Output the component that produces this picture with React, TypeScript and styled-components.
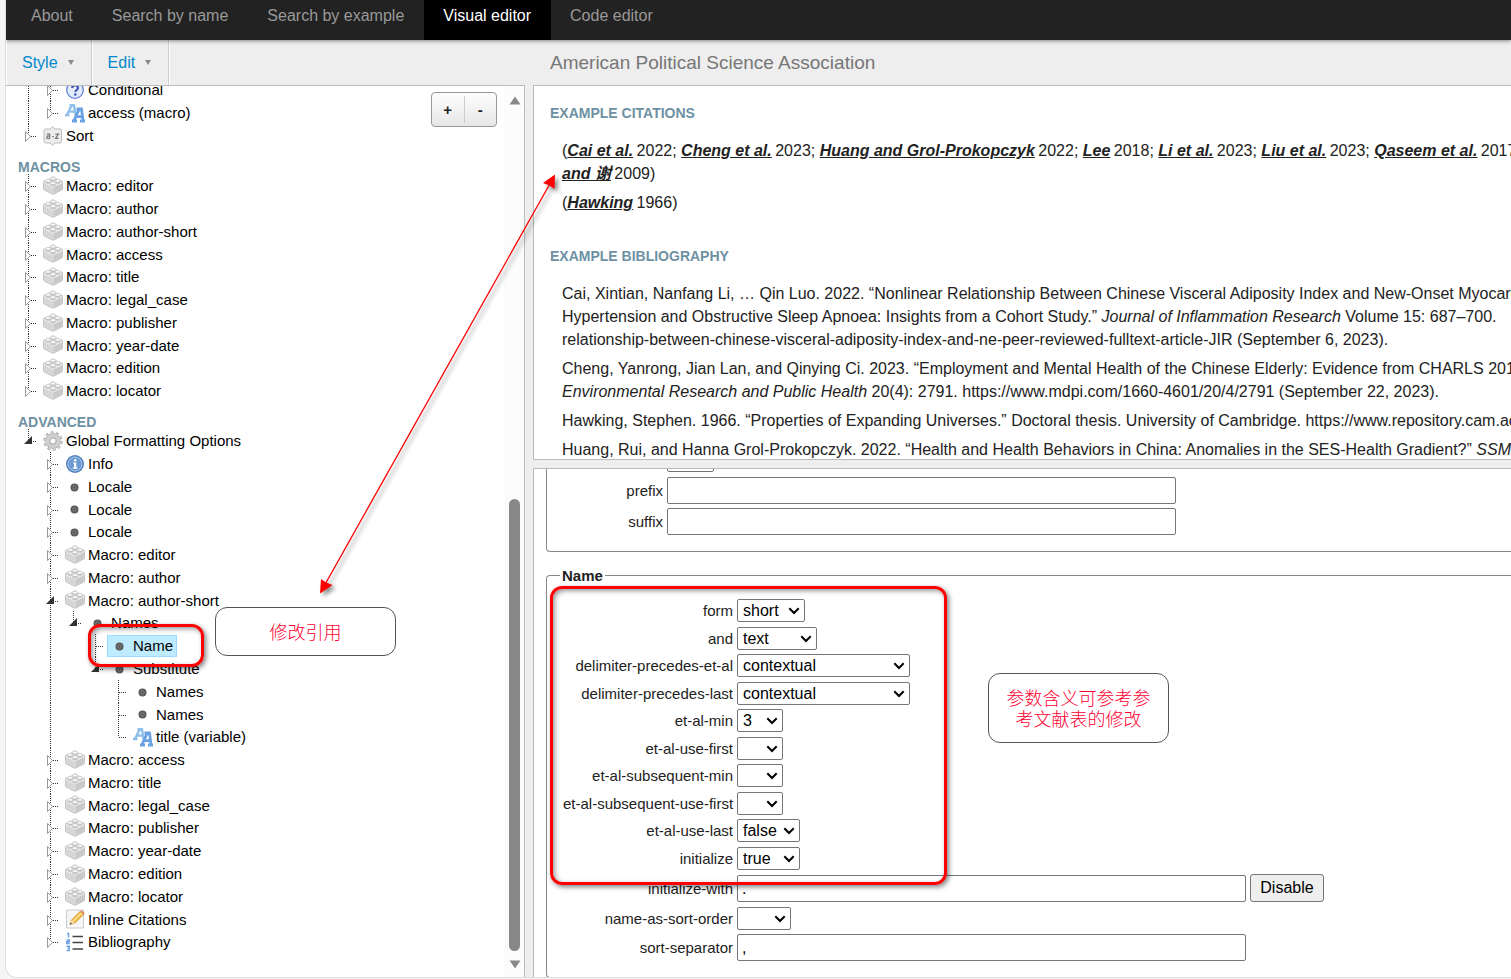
import React from "react";
import styled, { createGlobalStyle, css } from "styled-components";

const Global = createGlobalStyle`
  *, *::before, *::after { box-sizing: border-box; }
  body {
    margin: 0;
    background: #f5f5f5;
    color: #222;
    font: 16px/23px "Liberation Sans", Arial, "Noto Sans CJK SC", sans-serif;
    overflow: hidden;
  }
`;

/* ---------- page frame ---------- */

const Page = styled.div`
  position: relative;
  height: 100vh;
  padding: 0 0 1px 5px;
  overflow: hidden;
`;

const Frame = styled.div`
  display: flex;
  flex-direction: column;
  height: 100%;
  background: #eee;
  border-left: 1px solid #ddd;
  border-bottom: 1px solid #ddd;
  border-bottom-left-radius: 12px;
  overflow: hidden;
`;

const Nav = styled.nav`
  display: flex;
  flex: none;
  height: 40px;
  padding-left: 6px;
  background: #222;
  box-shadow: 0 1px 4px rgba(0, 0, 0, 0.45);
  z-index: 1;
`;

const NavLink = styled.a<{ $active?: boolean }>`
  padding: 4px 20px 0 19px;
  color: ${(p) => (p.$active ? "#fff" : "#999")};
  background: ${(p) => (p.$active ? "#000" : "transparent")};
  text-decoration: none;
  white-space: nowrap;
`;

const Toolbar = styled.div`
  display: flex;
  flex: none;
  height: 45px;
  box-shadow: inset 1px 0 0 #fff;
`;

const MenuButton = styled.button`
  display: flex;
  align-items: center;
  gap: 10px;
  padding: 0 17px 0 16px;
  border: 0;
  border-right: 1px solid #ccc;
  box-shadow: 1px 0 0 #fff;
  background: transparent;
  color: #08c;
  font: inherit;

  &::after {
    content: "";
    border: 3px solid transparent;
    border-top: 5px solid #888;
    border-bottom: 0;
  }
`;

const MenuGroup = styled.div`
  display: flex;
  flex: none;
  width: 527px;
`;

const StyleTitle = styled.h1`
  margin: 0;
  padding-left: 17px;
  color: #777;
  font-size: 19px;
  font-weight: 400;
  line-height: 45px;
  white-space: nowrap;
`;

const Body = styled.div`
  display: flex;
  flex: 1;
  min-height: 0;
  gap: 8px;
`;

/* ---------- tree pane ---------- */

const TreePane = styled.section`
  position: relative;
  display: flex;
  flex: none;
  width: 519px;
  background: #fff;
  border-top: 1px solid #bbb;
  border-right: 1px solid #bbb;
  overflow: hidden;
`;

const TreeScroll = styled.div`
  flex: 1;
  min-width: 0;
  margin-top: -8px;
  color: #000;
  font-size: 15px;
`;

const TreeHeading = styled.h2`
  margin: 0;
  padding: 13px 0 0 12px;
  color: #6d91a3;
  font-size: 14px;
  line-height: 14px;
`;

const Tree = styled.ul`
  margin: 0;
  padding: 0 0 0 12px;
  list-style: none;
`;

const TreeItem = styled.li`
  display: flex;
  align-items: center;
  height: 23px;

  &:nth-child(9n + 4),
  &:nth-child(9n + 8) {
    height: 22px;
  }
`;

const Guides = styled.svg`
  flex: none;
  height: 100%;
`;

const ItemLabel = styled.span<{ $selected?: boolean }>`
  display: flex;
  align-items: center;
  gap: 3px;
  height: 22px;
  padding: 0 3px 0 2px;
  border: 1px solid transparent;
  white-space: nowrap;
  ${(p) =>
    p.$selected &&
    css`
      background: #beebff;
      border-color: #99defd;
    `}
`;

const AddRemove = styled.div`
  position: absolute;
  top: 6px;
  right: 27px;
  display: flex;
  align-items: center;
  width: 66px;
  height: 35px;
  border: 1px solid #999;
  border-radius: 4px;
  background: linear-gradient(#fefefe, #e6e6e6);
`;

const AddRemoveButton = styled.button`
  flex: 1;
  height: 27px;
  padding: 0;
  border: 0;
  background: transparent;
  color: #222;
  font: bold 15px/27px "Liberation Sans", Arial, sans-serif;

  & + & {
    border-left: 1px solid #ccc;
  }
`;

const Scrollbar = styled.div`
  display: flex;
  flex: none;
  flex-direction: column;
  align-items: center;
  width: 20px;
  padding: 10px 0 8px;
  border-left: 1px solid #fbfbfb;
  background: #fcfcfc;
`;

const ScrollTrack = styled.div`
  display: flex;
  flex: 1;
  flex-direction: column;
  justify-content: flex-end;
  padding: 9px 0;
`;

const ScrollThumb = styled.div`
  width: 11px;
  height: 54%;
  border-radius: 6px;
  background: #888;
`;

/* ---------- right column ---------- */

const RightColumn = styled.div`
  display: flex;
  flex: 1;
  flex-direction: column;
  gap: 8px;
  min-width: 0;
`;

const Preview = styled.section`
  flex: none;
  height: 375px;
  padding: 19px 0 0 16px;
  background: #fff;
  border: solid #bbb;
  border-width: 1px 0 1px 1px;
  overflow: hidden;
  white-space: nowrap;
`;

const PreviewHeading = styled.h2`
  margin: 0 0 18px;
  color: #6d91a3;
  font-size: 14px;
  line-height: 16px;
`;

const Entries = styled.div`
  margin-bottom: 34px;
  padding-left: 12px;
`;

const Entry = styled.p`
  margin: 0 0 6px;
`;

const Cite = styled.a`
  margin-right: -1px;
  color: #222;
  font-weight: bold;
  font-style: italic;
  text-decoration: underline;
`;

const Properties = styled.section`
  flex: 1;
  min-height: 0;
  padding-left: 12px;
  background: #fff;
  border: solid #bbb;
  border-width: 1px 0 0 1px;
  overflow: hidden;
`;

const PropertyForm = styled.form`
  display: flex;
  flex-direction: column;
  gap: 12px;
  margin-top: -55px;
`;

const Group = styled.fieldset`
  min-width: 0;
  margin: 0;
  padding: 10px 0 13px 16px;
  border: 1px solid #888;
  border-right: 0;
  border-radius: 4px 0 0 4px;
`;

const GroupTitle = styled.legend`
  margin-left: -3px;
  padding: 0 2px;
  font-size: 15px;
  font-weight: bold;
  line-height: 23px;
`;

const Field = styled.div<{ $labelWidth: number }>`
  display: grid;
  grid-template-columns: ${(p) => p.$labelWidth}px auto auto;
  justify-content: start;
  align-items: end;
  column-gap: 4px;
  padding: 2px 0 3px;
  font-size: 15px;

  &:nth-of-type(even) {
    padding-bottom: 2px;
  }
`;

const FieldLabel = styled.label`
  align-self: center;
  text-align: right;
  white-space: nowrap;
`;

const TextInput = styled.input`
  width: 509px;
  height: 27px;
  padding: 0 4px;
  border: 1px solid #767676;
  border-radius: 2px;
  background: #fff;
  color: #000;
  font: 16px "Liberation Sans", Arial, sans-serif;
`;

const SelectBox = styled.span`
  display: grid;
  align-items: center;
  justify-items: end;

  & > * {
    grid-area: 1 / 1;
  }

  & > svg {
    margin-right: 5px;
    pointer-events: none;
  }
`;

const SelectInput = styled.select<{ $width: number }>`
  width: ${(p) => p.$width}px;
  height: 23px;
  padding: 0 0 0 5px;
  border: 1px solid #767676;
  border-radius: 2px;
  background: #fff;
  color: #000;
  font: 16px "Liberation Sans", Arial, sans-serif;
  appearance: none;
`;

const PlainButton = styled.button`
  width: 74px;
  height: 28px;
  padding: 0;
  border: 1px solid #767676;
  border-radius: 3px;
  background: #efefef;
  color: #000;
  font: 16px "Liberation Sans", Arial, sans-serif;
`;

/* ---------- annotations laid over the page ---------- */

const Highlight = styled.div`
  position: absolute;
  border: 3px solid #f00;
  border-radius: 12px;
  box-shadow: 2px 2px 5px rgba(0, 0, 0, 0.5), inset 2px 2px 5px rgba(0, 0, 0, 0.4);
  pointer-events: none;
`;

const NameHighlight = styled(Highlight)`
  left: 88px;
  top: 624px;
  width: 116px;
  height: 43px;
`;

const FormHighlight = styled(Highlight)`
  left: 550px;
  top: 586px;
  width: 397px;
  height: 299px;
`;

const Note = styled.p`
  position: absolute;
  display: flex;
  align-items: center;
  justify-content: center;
  width: 181px;
  margin: 0;
  border: 1px solid #555;
  border-radius: 12px;
  background: #fff;
  color: #ff0030;
  font: 300 18px/21px "Noto Sans CJK SC", sans-serif;
  text-align: center;
`;

const CitationNote = styled(Note)`
  left: 215px;
  top: 607px;
  height: 49px;
`;

const ParameterNote = styled(Note)`
  left: 988px;
  top: 673px;
  height: 70px;
`;

const ArrowLayer = styled.svg`
  position: absolute;
  left: 310px;
  top: 166px;
  pointer-events: none;
  filter: drop-shadow(3px 3px 2px rgba(0, 0, 0, 0.45));
`;

/* ---------- icons ---------- */

type IconName =
  | "brick" | "bullet" | "gear" | "info" | "question"
  | "letters" | "sort" | "pencil" | "list";

function Icon({ name }: { name: IconName }) {
  return (
    <svg width="20" height="20" viewBox="0 0 20 20" aria-hidden="true">
      {name === "brick" && (
        <g>
          <path
            d="M1 5.2 7.200 2.800C7.200.5 12.800.5 12.800 2.800L19 5.200Q19.600 5.500 19.600 6.200V12.800Q19.600 13.500 19 13.800L11 17.900Q10 18.400 9 17.900L1 13.800Q.4 13.500.4 12.800V6.200Q.4 5.500 1 5.200Z"
            fill="#e9e9e9" stroke="#b0b0b0" strokeWidth="0.8"
          />
          <path d="M1.200 7.400 9.700 11.400V17.400L1.200 13.200Z" fill="#d6d6d6" />
          <path d="M18.800 7.400 10.300 11.400V17.400L18.800 13.200Z" fill="#c9c9c9" />
          <g fill="#c4c4c4">
            <path d="M7.400 2.700v2c0 1.400 5.200 1.400 5.200 0v-2Z" />
            <path d="M2.600 4.700v2c0 1.400 5.200 1.400 5.200 0v-2Z" />
            <path d="M12.200 4.700v2c0 1.400 5.200 1.400 5.200 0v-2Z" />
            <path d="M7.400 7.200v2c0 1.400 5.200 1.400 5.200 0v-2Z" />
          </g>
          <g fill="#fafafa" stroke="#bcbcbc" strokeWidth="0.5">
            <ellipse cx="10" cy="2.600" rx="2.600" ry="1.400" />
            <ellipse cx="5.200" cy="4.800" rx="2.600" ry="1.400" />
            <ellipse cx="14.800" cy="4.800" rx="2.600" ry="1.400" />
            <ellipse cx="10" cy="7.200" rx="2.600" ry="1.400" />
          </g>
        </g>
      )}
      {name === "bullet" && (
        <>
          <circle cx="9.500" cy="10.500" r="4" fill="#5a5a5a" />
          <circle cx="9.500" cy="10.500" r="1.800" fill="none" stroke="#858585" strokeWidth="0.8" />
        </>
      )}
      {name === "gear" && (
        <g>
          <circle cx="10" cy="10" r="8" fill="none" stroke="#a8a8a8" strokeWidth="3.400" strokeDasharray="2.700 2.330" />
          <circle cx="10" cy="10" r="5.200" fill="none" stroke="#a8a8a8" strokeWidth="5" />
          <circle cx="10" cy="10" r="7.800" fill="none" stroke="#cfcfcf" strokeWidth="2.400" strokeDasharray="1.600 3.300" strokeDashoffset="-0.5" />
          <circle cx="10" cy="10" r="5.300" fill="none" stroke="#d0d0d0" strokeWidth="3.600" />
          <circle cx="10" cy="10" r="2.800" fill="#fff" stroke="#a0a0a0" strokeWidth="0.6" />
        </g>
      )}
      {name === "info" && (
        <g>
          <circle cx="10" cy="10" r="9" fill="#4d80bd" />
          <circle cx="10" cy="10" r="7" fill="#6c9bd1" stroke="#b5cdea" strokeWidth="1" />
          <path d="M8.3 8.5h3v5h1.2v1.2H7.8v-1.2H9V9.7h-.7Z" fill="#fff" />
          <circle cx="10.2" cy="6.2" r="1.3" fill="#fff" />
        </g>
      )}
      {name === "question" && (
        <g>
          <circle cx="10" cy="10" r="8.3" fill="#e3eafa" stroke="#5f7fd8" strokeWidth="1.3" />
          <path d="M7.2 8c0-3.6 5.8-3.6 5.8 0 0 2-2.7 2-2.7 4" fill="none" stroke="#3c4fb4" strokeWidth="2" />
          <circle cx="10.3" cy="14.5" r="1.2" fill="#3c4fb4" />
        </g>
      )}
      {name === "letters" && (
        <g fill="none">
          <path d="M2 12 6.500 2.500h2.500L10.500 12M4 8.600H10M0 12h4.500M4.500 2.200h5" stroke="#8fc0ec" strokeWidth="2.400" />
          <path d="M9 17.600 14 6.500h2.600L18 17.600M11.500 13.600h6M7 18h5M15 18h5M11.500 6h6" stroke="#6aa2e4" strokeWidth="2.800" />
        </g>
      )}
      {name === "sort" && (
        <g>
          <path d="M2.500 3H7l2.500-2.300L12 3h5a1.500 1.500 0 0 1 1.500 1.500v11A1.500 1.500 0 0 1 17 17h-5l-2.500 2.300L7 17H2.500A1.500 1.500 0 0 1 1 15.500v-11A1.500 1.500 0 0 1 2.500 3Z" fill="#ececec" stroke="#bbb" />
          <path d="M4 8.200h2.600v4.300H4v-2.300h2.600M9 10.500h1.800M12.300 8.200h3.200l-3 4.200h3.200" fill="none" stroke="#777" strokeWidth="1.200" />
        </g>
      )}
      {name === "pencil" && (
        <g>
          <path d="M1.500 1h17v18h-17Z" fill="#f6f6f6" stroke="#ccc" />
          <path d="m5 15.500 1.200-4.200L15 2.500l3.800 2.800-9 9Z" fill="#f3bd45" stroke="#c88b2b" strokeWidth="0.7" />
          <path d="m7.800 12.500 9-8.600" stroke="#fde29a" strokeWidth="1.400" />
          <path d="m15 2.500 1.400-1.300 3.300 2.900-.9 1.200Z" fill="#e2895c" />
          <path d="m5 15.500 1.200-4.200 3.600 3Z" fill="#f5dfbd" />
          <path d="m5 15.500.6-2 1.500 1.300Z" fill="#444" />
        </g>
      )}
      {name === "list" && (
        <g>
          <path d="M7.500 4.500H18M7.500 10.500H18M7.500 17H18" stroke="#444" strokeWidth="1.400" />
          <path d="M2 1.500h1.500v4M1.500 8h2.800v1.800H1.700v1.800h3M1.500 14.300h2.700v1.700H2.500h1.700v2.500H1.500" fill="none" stroke="#6ea1e0" strokeWidth="1.500" />
        </g>
      )}
    </svg>
  );
}

/* ---------- tree ---------- */

type Node = {
  label: string;
  icon: IconName;
  depth?: number;
  toggle?: "open" | "closed";
  /** last child of its parent: the guide line stops at this row */
  last?: boolean;
  /** depths of the ancestors whose guide lines run past this row */
  through?: number[];
  selected?: boolean;
};

const INDENTS = [0, 22, 45, 67, 90];

function TreeRow({ node }: { node: Node }) {
  const depth = node.depth ?? 0;
  const indent = INDENTS[depth];
  const x = indent + 10;
  const dots = { stroke: "#333", strokeDasharray: "1 1" };
  return (
    <TreeItem role="treeitem" aria-level={depth + 1} aria-selected={!!node.selected}>
      <Guides width={22 + indent} aria-hidden="true">
        {(node.through ?? []).map((d) => (
          <line key={d} x1={INDENTS[d] + 10.5} x2={INDENTS[d] + 10.5} y1="0" y2="23" {...dots} />
        ))}
        <line x1={x + 0.5} x2={x + 0.5} y1="0" y2={node.last ? 12 : 23} {...dots} />
        <line x1={x + 1} x2={x + 9} y1="12.5" y2="12.5" {...dots} />
        {node.toggle === "closed" && (
          <path d={`M${x - 2.5} 7.500 v10 l5 -5Z`} fill="#fff" stroke="#999" />
        )}
        {node.toggle === "open" && <path d={`M${x + 4} 7 v8 h-8Z`} fill="#333" />}
      </Guides>
      <ItemLabel $selected={node.selected}>
        <Icon name={node.icon} />
        {node.label}
      </ItemLabel>
    </TreeItem>
  );
}

const MACROS = [
  "editor", "author", "author-short", "access", "title",
  "legal_case", "publisher", "year-date", "edition", "locator",
];

const macro = (name: string, extra: Partial<Node> = {}): Node => ({
  label: `Macro: ${name}`,
  icon: "brick",
  toggle: "closed",
  ...extra,
});

const BIBLIOGRAPHY_NODES: Node[] = [
  { label: "Conditional", icon: "question", depth: 1, toggle: "closed", through: [0] },
  { label: "access (macro)", icon: "letters", depth: 1, toggle: "closed", last: true, through: [0] },
  { label: "Sort", icon: "sort", toggle: "closed", last: true },
];

const MACRO_NODES = MACROS.map((name) => macro(name, { last: name === "locator" }));

const ADVANCED_NODES: Node[] = [
  { label: "Global Formatting Options", icon: "gear", toggle: "open", last: true },
  { label: "Info", icon: "info", depth: 1, toggle: "closed" },
  { label: "Locale", icon: "bullet", depth: 1, toggle: "closed" },
  { label: "Locale", icon: "bullet", depth: 1, toggle: "closed" },
  { label: "Locale", icon: "bullet", depth: 1, toggle: "closed" },
  macro("editor", { depth: 1 }),
  macro("author", { depth: 1 }),
  macro("author-short", { depth: 1, toggle: "open" }),
  { label: "Names", icon: "bullet", depth: 2, toggle: "open", last: true, through: [1] },
  { label: "Name", icon: "bullet", depth: 3, through: [1], selected: true },
  { label: "Substitute", icon: "bullet", depth: 3, toggle: "open", last: true, through: [1] },
  { label: "Names", icon: "bullet", depth: 4, through: [1] },
  { label: "Names", icon: "bullet", depth: 4, through: [1] },
  { label: "title (variable)", icon: "letters", depth: 4, last: true, through: [1] },
  ...MACROS.slice(3).map((name) => macro(name, { depth: 1 })),
  { label: "Inline Citations", icon: "pencil", depth: 1, toggle: "closed" },
  { label: "Bibliography", icon: "list", depth: 1, toggle: "closed", last: true },
];

function TreeList({ label, nodes }: { label: string; nodes: Node[] }) {
  return (
    <Tree role="tree" aria-label={label}>
      {nodes.map((node, i) => (
        <TreeRow key={i} node={node} />
      ))}
    </Tree>
  );
}

/* ---------- property form ---------- */

type SelectSpec = { name: string; value: string; width: number };

const NAME_SELECTS: SelectSpec[] = [
  { name: "form", value: "short", width: 68 },
  { name: "and", value: "text", width: 80 },
  { name: "delimiter-precedes-et-al", value: "contextual", width: 173 },
  { name: "delimiter-precedes-last", value: "contextual", width: 173 },
  { name: "et-al-min", value: "3", width: 46 },
  { name: "et-al-use-first", value: "", width: 46 },
  { name: "et-al-subsequent-min", value: "", width: 46 },
  { name: "et-al-subsequent-use-first", value: "", width: 46 },
  { name: "et-al-use-last", value: "false", width: 63 },
  { name: "initialize", value: "true", width: 63 },
];

function SelectField({ name, value, width, labelWidth = 170 }: SelectSpec & { labelWidth?: number }) {
  return (
    <Field $labelWidth={labelWidth}>
      <FieldLabel htmlFor={name}>{name}</FieldLabel>
      <SelectBox>
        <SelectInput id={name} $width={width} defaultValue={value}>
          <option value={value}>{value}</option>
        </SelectInput>
        <svg width="12" height="8" aria-hidden="true">
          <path d="M1.300 1.300 6 6 10.700 1.300" fill="none" stroke="#000" strokeWidth="2" />
        </svg>
      </SelectBox>
    </Field>
  );
}

function TextField({
  name, value = "", labelWidth = 170, children,
}: { name: string; value?: string; labelWidth?: number; children?: React.ReactNode }) {
  return (
    <Field $labelWidth={labelWidth}>
      <FieldLabel htmlFor={name}>{name}</FieldLabel>
      <TextInput id={name} type="text" defaultValue={value} />
      {children}
    </Field>
  );
}

const C = ({ children }: { children: React.ReactNode }) => <Cite href="#">{children}</Cite>;

export default function App() {
  return (
    <Page>
      <Global />
      <Frame>
        <Nav>
          <NavLink href="#">About</NavLink>
          <NavLink href="#">Search by name</NavLink>
          <NavLink href="#">Search by example</NavLink>
          <NavLink href="#" $active>Visual editor</NavLink>
          <NavLink href="#">Code editor</NavLink>
        </Nav>
        <Toolbar>
          <MenuGroup>
            <MenuButton type="button">Style</MenuButton>
            <MenuButton type="button">Edit</MenuButton>
          </MenuGroup>
          <StyleTitle>American Political Science Association</StyleTitle>
        </Toolbar>
        <Body>
          <TreePane>
            <TreeScroll>
              <TreeList label="Bibliography" nodes={BIBLIOGRAPHY_NODES} />
              <TreeHeading>MACROS</TreeHeading>
              <TreeList label="Macros" nodes={MACRO_NODES} />
              <TreeHeading>ADVANCED</TreeHeading>
              <TreeList label="Advanced" nodes={ADVANCED_NODES} />
            </TreeScroll>
            <AddRemove>
              <AddRemoveButton type="button">+</AddRemoveButton>
              <AddRemoveButton type="button">-</AddRemoveButton>
            </AddRemove>
            <Scrollbar aria-hidden="true">
              <svg width="12" height="9"><path d="M6 0.500 11.500 8.500h-11Z" fill="#888" /></svg>
              <ScrollTrack>
                <ScrollThumb />
              </ScrollTrack>
              <svg width="12" height="9"><path d="M6 8.500 11.500 0.500h-11Z" fill="#888" /></svg>
            </Scrollbar>
          </TreePane>
          <RightColumn>
            <Preview>
              <PreviewHeading>EXAMPLE CITATIONS</PreviewHeading>
              <Entries>
                <Entry>
                  (<C>Cai et al.</C> 2022; <C>Cheng et al.</C> 2023; <C>Huang and Grol-Prokopczyk</C> 2022;{" "}
                  <C>Lee</C> 2018; <C>Li et al.</C> 2023; <C>Liu et al.</C> 2023; <C>Qaseem et al.</C> 2017;
                  <br />
                  <C>and 谢</C> 2009)
                </Entry>
                <Entry>(<C>Hawking</C> 1966)</Entry>
              </Entries>
              <PreviewHeading>EXAMPLE BIBLIOGRAPHY</PreviewHeading>
              <Entries>
                <Entry>
                  Cai, Xintian, Nanfang Li, … Qin Luo. 2022. “Nonlinear Relationship Between Chinese Visceral
                  Adiposity Index and New-Onset Myocardial
                  <br />
                  Hypertension and Obstructive Sleep Apnoea: Insights from a Cohort Study.”{" "}
                  <i>Journal of Inflammation Research</i> Volume 15: 687–700.
                  <br />
                  relationship-between-chinese-visceral-adiposity-index-and-ne-peer-reviewed-fulltext-article-JIR
                  (September 6, 2023).
                </Entry>
                <Entry>
                  Cheng, Yanrong, Jian Lan, and Qinying Ci. 2023. “Employment and Mental Health of the Chinese
                  Elderly: Evidence from CHARLS 2018.”
                  <br />
                  <i>Environmental Research and Public Health</i> 20(4): 2791.
                  https://www.mdpi.com/1660-4601/20/4/2791 (September 22, 2023).
                </Entry>
                <Entry>
                  Hawking, Stephen. 1966. “Properties of Expanding Universes.” Doctoral thesis. University of
                  Cambridge. https://www.repository.cam.ac.uk
                </Entry>
                <Entry>
                  Huang, Rui, and Hanna Grol-Prokopczyk. 2022. “Health and Health Behaviors in China: Anomalies
                  in the SES-Health Gradient?” <i>SSM - Population</i>
                </Entry>
              </Entries>
            </Preview>
            <Properties>
              <PropertyForm>
                <Group>
                  <GroupTitle>Affixes</GroupTitle>
                  <SelectField name="display" value="" width={47} labelWidth={100} />
                  <TextField name="prefix" labelWidth={100} />
                  <TextField name="suffix" labelWidth={100} />
                </Group>
                <Group>
                  <GroupTitle>Name</GroupTitle>
                  {NAME_SELECTS.map((spec) => (
                    <SelectField key={spec.name} {...spec} />
                  ))}
                  <TextField name="initialize-with" value=".">
                    <PlainButton type="button">Disable</PlainButton>
                  </TextField>
                  <SelectField name="name-as-sort-order" value="" width={54} />
                  <TextField name="sort-separator" value="," />
                </Group>
              </PropertyForm>
            </Properties>
          </RightColumn>
        </Body>
      </Frame>

      <NameHighlight />
      <FormHighlight />
      <CitationNote>修改引用</CitationNote>
      <ParameterNote>
        参数含义可参考参
        <br />
        考文献表的修改
      </ParameterNote>
      <ArrowLayer width="260" height="440" aria-hidden="true">
        <path d="M242 14 13 422" stroke="#f00" strokeWidth="1.300" />
        <path d="M245 8.500 244.500 23 239.500 19.500 233 17Z" fill="#f00" />
        <path d="M10 427.500 11 413 16 416.500 22.500 419Z" fill="#f00" />
      </ArrowLayer>
    </Page>
  );
}
